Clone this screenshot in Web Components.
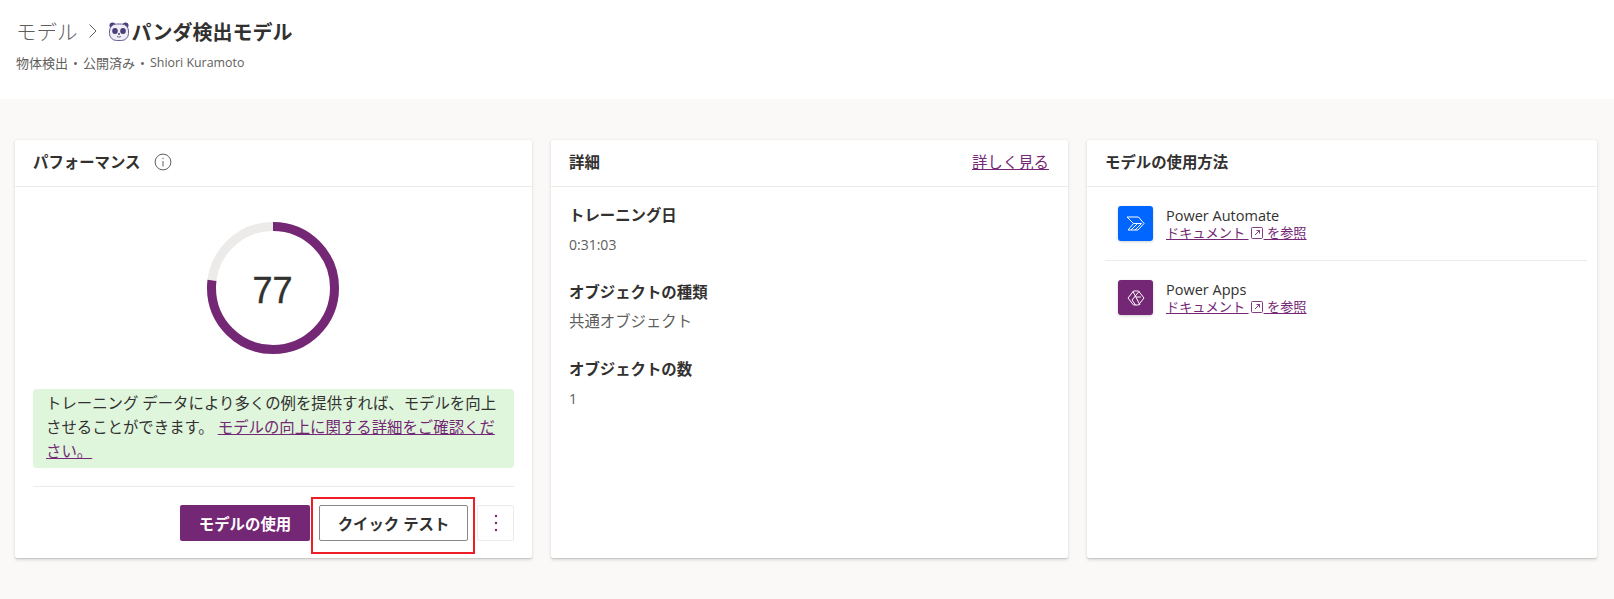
<!DOCTYPE html>
<html lang="ja">
<head>
<meta charset="utf-8">
<title>パンダ検出モデル</title>
<style>
  html, body { margin: 0; padding: 0; height: 100%; }
  body {
    background: #faf9f8;
    color: #323130;
    font-family: "Open Sans", "Noto Sans CJK JP", sans-serif;
    overflow: hidden;
  }
</style>
</head>
<body>
<model-page></model-page>

<template id="page-header-tpl">
  <style>
    :host { display: block; height: 99px; box-sizing: border-box; background: #fff; padding: 13px 16px 0; }
    .crumbs { display: flex; align-items: center; height: 36px; }
    .root { font-size: 20.5px; color: #605e5c; font-weight: 300; }
    .chev { margin: 0 10px 0 10px; width: 10px; height: 16px; }
    .panda { width: 22px; height: 21px; margin-right: 2px; }
    h1 { margin: 0; font-size: 20px; font-weight: 700; color: #323130; }
    .sub { margin-top: 5px; font-size: 13px; color: #605e5c; line-height: 18px; display: flex; }
    .sep { width: 15px; text-align: center; }
    .name { font-size: 12.4px; }
  </style>
  <div class="crumbs">
    <span class="root">モデル</span>
    <svg class="chev" viewBox="0 0 10 16"><path d="M1.500 1.500 8 8l-6.500 6.500" fill="none" stroke="#605e5c" stroke-width="1"/></svg>
    <svg class="panda" viewBox="0 0 21 21">
      <circle cx="4" cy="4.500" r="3" fill="#4b3f7a"/>
      <circle cx="17" cy="4.500" r="3" fill="#4b3f7a"/>
      <rect x="1" y="3" width="19" height="16.500" rx="7" fill="#efedf5" stroke="#6a5f96" stroke-width="1"/>
      <ellipse cx="6.500" cy="10" rx="2.800" ry="3" fill="#4b3f7a"/>
      <ellipse cx="14.500" cy="10" rx="2.800" ry="3" fill="#4b3f7a"/>
      <circle cx="10.500" cy="13" r="1" fill="#4b3f7a"/>
      <path d="M8.500 15.500q2 1.200 4 0" fill="none" stroke="#4b3f7a" stroke-width=".8"/>
    </svg>
    <h1>パンダ検出モデル</h1>
  </div>
  <div class="sub"><span>物体検出</span><span class="sep">•</span><span>公開済み</span><span class="sep">•</span><span class="name">Shiori Kuramoto</span></div>
</template>

<template id="info-card-tpl">
  <style>
    :host { display: flex; flex-direction: column; background: #fff; box-shadow: 0 1.6px 3.6px rgba(0,0,0,.13), 0 .3px .9px rgba(0,0,0,.11); border-radius: 2px; min-width: 0; height: 418px; }
    header { display: flex; align-items: center; justify-content: space-between; height: 46px; box-sizing: content-box; padding: 0 19px 0 18px; border-bottom: 1px solid #edebe9; flex: none; }
    h2 { margin: 0 0 3px; font-size: 15.4px; font-weight: 700; color: #323130; display: flex; align-items: center; }
    .body { flex: 1; display: flex; flex-direction: column; min-height: 0; }
  </style>
  <header><h2><slot name="title"></slot></h2><slot name="action"></slot></header>
  <div class="body"><slot></slot></div>
</template>

<template id="score-ring-tpl">
  <style>
    :host { display: block; width: 132px; height: 132px; position: relative; }
    svg { display: block; }
    .val { position: absolute; inset: 6px 0 0; display: flex; align-items: center; justify-content: center; font: 36px "Liberation Sans", sans-serif; color: #323130; -webkit-text-stroke: .4px #323130; }
  </style>
  <svg width="132" height="132" viewBox="0 0 132 132">
    <circle cx="66" cy="66" r="61.500" fill="none" stroke="#edebe9" stroke-width="9"/>
    <circle cx="66" cy="66" r="61.500" fill="none" stroke="#742774" stroke-width="9" pathLength="100" stroke-dasharray="77 100" transform="rotate(-90 66 66)"/>
  </svg>
  <div class="val"><slot></slot></div>
</template>

<template id="perf-panel-tpl">
  <style>
    :host { display: flex; flex-direction: column; flex: 1; padding: 0 18px 0 18px; min-height: 0; }
    score-ring { align-self: center; margin: 35px 2px 0 0; }
    .tip { margin-top: 35px; background: #dff6dd; border-radius: 4px; padding: 3px 14px 0 13px; font-size: 15.4px; line-height: 24px; color: #323130; height: 79px; box-sizing: border-box; }
    a { color: #742774; }
    .foot { margin-top: 18px; border-top: 1px solid #edebe9; padding-top: 18px; display: flex; justify-content: flex-end; }
    button { font: 700 15.4px "Open Sans", "Noto Sans CJK JP", sans-serif; height: 36px; border-radius: 2px; padding: 0; box-sizing: border-box; cursor: pointer; }
    .primary { width: 130px; background: #742774; color: #fff; border: 0; }
    .second { width: 149px; margin-left: 9px; background: #fff; color: #323130; border: 1px solid #8a8886; }
    .more { width: 37px; margin-left: 9px; background: #fff; border: 1px solid #edebe9; color: #742774; display: flex; align-items: center; justify-content: center; }
    .mark { position: absolute; left: 1px; top: -8px; width: 164px; height: 57px; box-sizing: border-box; border: 2px solid #ee1c25; pointer-events: none; }
    .wrap { position: relative; display: flex; }
  </style>
  <score-ring>77</score-ring>
  <div class="tip">トレーニング データにより多くの例を提供すれば、モデルを向上させることができます。 <a href="#">モデルの向上に関する詳細をご確認ください。</a></div>
  <div class="foot">
    <button class="primary">モデルの使用</button>
    <span class="wrap">
      <button class="second">クイック テスト</button>
      <span class="mark"></span>
    </span>
    <button class="more" aria-label="その他"><svg width="4" height="18" viewBox="0 0 4 18" fill="#742774"><circle cx="2" cy="2" r="1.200"/><circle cx="2" cy="9" r="1.200"/><circle cx="2" cy="16" r="1.200"/></svg></button>
  </div>
</template>

<template id="detail-item-tpl">
  <style>
    :host { display: block; margin-bottom: 28px; }
    .k { font-size: 15.4px; font-weight: 700; color: #323130; line-height: 20px; }
    .v { margin-top: 9px; font-size: var(--v-size, 15.4px); color: #605e5c; line-height: 20px; }
  </style>
  <div class="k"><slot name="k"></slot></div>
  <div class="v"><slot></slot></div>
</template>

<template id="usage-row-tpl">
  <style>
    :host { display: flex; align-items: center; height: 74px; box-sizing: border-box; margin: 0 10px 0 18px; padding: 0 0 1px 13px; border-bottom: 1px solid #edebe9; }
    :host(:last-child) { border-bottom: 0; }
    .ico { width: 35px; height: 35px; flex: none; border-radius: 3px; display: flex; align-items: center; justify-content: center; background: var(--tile, #06f); box-shadow: 0 1px 3px rgba(0,0,0,.18); }
    .txt { margin-left: 13px; padding-top: 1px; }
    .name { font-size: 14.5px; line-height: 18px; color: #323130; }
    a { display: block; margin-top: 1px; font-size: 13.2px; line-height: 15px; color: #742774; }
    a svg { vertical-align: -1px; margin: 0 1px 0 2px; }
  </style>
  <div class="ico"><slot name="icon"></slot></div>
  <div class="txt">
    <div class="name"><slot></slot></div>
    <a href="#">ドキュメント <svg width="12" height="12" viewBox="0 0 12 12" fill="none" stroke="#742774" stroke-width=".9"><rect x=".5" y=".5" width="11" height="11" rx="1"/><path d="M4 8l4.500-4.500M5.500 3.500h3v3"/></svg> を参照</a>
  </div>
</template>

<template id="model-page-tpl">
  <style>
    :host { display: block; }
    .cards { display: grid; grid-template-columns: 517px 517px 510px; column-gap: 19px; padding: 41px 17px 0 15px; }
    a.more { font-size: 15.4px; color: #742774; margin-bottom: 3px; }
    .details { padding: 19px 18px 0; --v-size: 15.4px; }
    .plain { --v-size: 14px; }
    .i { width: 18px; height: 18px; margin-left: 14px; vertical-align: -3px; }
  </style>
  <page-header></page-header>
  <div class="cards">
    <info-card>
      <span slot="title">パフォーマンス<svg class="i" viewBox="0 0 18 18"><circle cx="9" cy="9" r="7.900" fill="none" stroke="#605e5c"/><path d="M9 8v5.500M9 4.800v1.300" stroke="#605e5c" fill="none"/></svg></span>
      <perf-panel></perf-panel>
    </info-card>
    <info-card>
      <span slot="title">詳細</span>
      <a class="more" slot="action" href="#">詳しく見る</a>
      <div class="details">
        <detail-item class="plain"><span slot="k">トレーニング日</span>0:31:03</detail-item>
        <detail-item><span slot="k">オブジェクトの種類</span>共通オブジェクト</detail-item>
        <detail-item class="plain"><span slot="k">オブジェクトの数</span>1</detail-item>
      </div>
    </info-card>
    <info-card>
      <span slot="title">モデルの使用方法</span>
      <div>
        <usage-row style="--tile:#0066ff">
          <svg slot="icon" width="19" height="15" viewBox="0 0 19 15" fill="none" stroke="#fff" stroke-width="1"><path d="M1 1h11.500L18 7.500 12 14H2l5.500-6.500zM7.500 7.500h8M5 14l6.500-6.500M9 14l6.500-6.500"/></svg>
          Power Automate
        </usage-row>
        <usage-row style="--tile:#742774">
          <svg slot="icon" width="18" height="18" viewBox="0 0 18 18" fill="none" stroke="#fff" stroke-width="1" stroke-linejoin="round"><path d="M6.500 2h5L17 9l-5.500 7h-5L1 9zM6 2.500 13 16M12 2.500 5 11l3.500 5M9 8l5 0"/></svg>
          Power Apps
        </usage-row>
      </div>
    </info-card>
  </div>
</template>

<script>
  // every element clones its own template into an open shadow root
  function define(tag) {
    const tpl = document.getElementById(tag + '-tpl');
    customElements.define(tag, class extends HTMLElement {
      constructor() {
        super();
        this.attachShadow({ mode: 'open' }).appendChild(tpl.content.cloneNode(true));
      }
    });
  }
  ['page-header', 'info-card', 'score-ring', 'perf-panel', 'detail-item', 'usage-row', 'model-page'].forEach(define);
</script>
</body>
</html>
